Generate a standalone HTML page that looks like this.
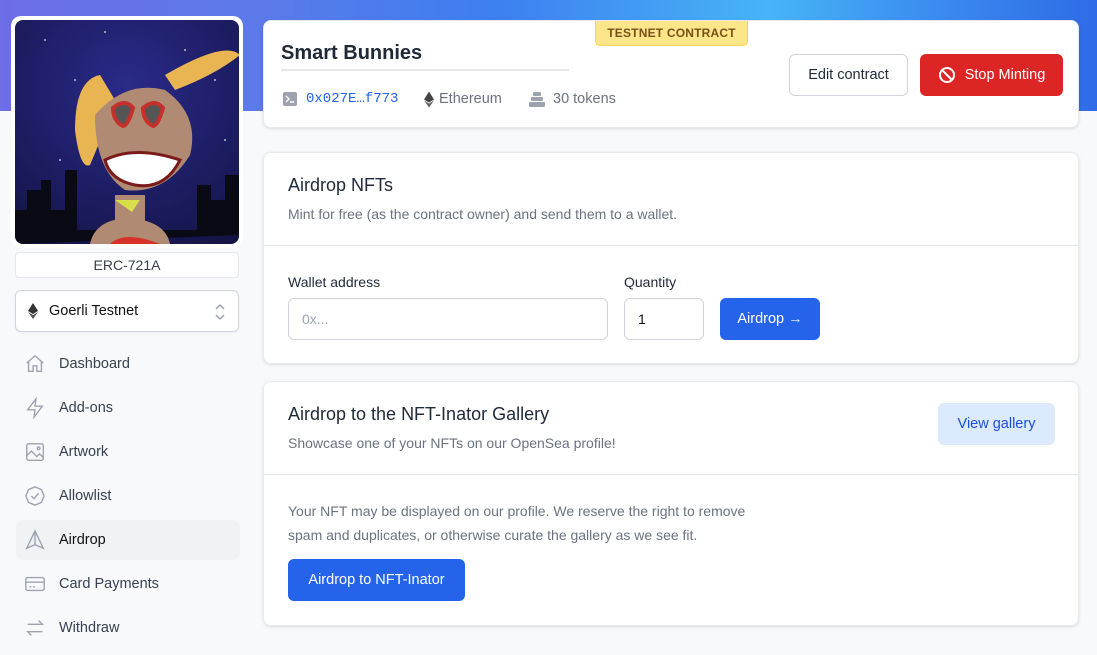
<!DOCTYPE html>
<html><head><meta charset="utf-8"><style>
*{box-sizing:border-box;margin:0;padding:0}
body{width:1097px;height:655px;overflow:hidden;background:#f8f9fb;font-family:"Liberation Sans",sans-serif;color:#1f2937;position:relative}
.band{position:absolute;left:0;top:0;width:1097px;height:111px;background:linear-gradient(90deg,#6d6ee8 0%,#5a7ae9 25%,#3d7ff0 45%,#47b4f6 70%,#3b8cf0 85%,#2f6be6 100%)}
.card{position:absolute;background:#fff;border-radius:8px;box-shadow:0 1px 3px rgba(0,0,0,.12);border:1px solid #e8eaee}
.nav{position:absolute;left:16px;width:224px;height:40px;display:flex;align-items:center;font-size:14.5px;color:#374151}
.nav svg{position:absolute;left:8px;width:22px;height:22px}
.nav span{position:absolute;left:43px}
.btn{position:absolute;border-radius:6px;font-size:14.5px;display:flex;align-items:center;justify-content:center}
.inp{position:absolute;border:1px solid #d1d5db;border-radius:6px;background:#fff;font-size:14px;padding-left:13px;display:flex;align-items:center}
</style></head><body>
<div class="band"></div>
<div style="position:absolute;left:11px;top:16px;width:232px;height:232px;background:#fff;border-radius:10px;"></div>
<div style="position:absolute;left:15px;top:20px;width:224px;height:224px;border-radius:8px;overflow:hidden;background:radial-gradient(circle at 50% 30%,#2a2a8a,#1a1a5a 70%,#121240)">
<svg width="224" height="224" viewBox="0 0 224 224">
<g fill="#fff" opacity=".7"><circle cx="30" cy="20" r="1"/><circle cx="90" cy="12" r="1"/><circle cx="170" cy="30" r="1"/><circle cx="200" cy="60" r="1"/><circle cx="45" cy="140" r="1"/><circle cx="210" cy="120" r="1"/><circle cx="60" cy="60" r="1"/></g>
<path d="M0 224V190h12v-20h14v-10h10v30h14v-40h12v60h120v-45h14v15h14v-25h14v60z" fill="#0a0a14"/>
<path d="M150 55 Q210 20 225 35 Q200 55 160 70z" fill="#e9b552"/>
<path d="M85 55 Q60 60 60 110 Q65 150 75 145 Q90 110 100 80z" fill="#e9b552"/>
<path d="M80 95 Q110 60 150 70 Q185 95 175 135 Q150 175 110 170 Q80 150 80 95z" fill="#b08a72"/>
<path d="M100 175 h30 v30 h-30z" fill="#b08a72"/>
<path d="M75 224 Q80 200 112 198 Q150 200 155 224z" fill="#b08a72"/>
<path d="M95 224 Q110 210 145 224z" fill="#d7322a"/>
<path d="M90 140 Q120 125 165 140 Q150 170 120 165 Q95 160 90 140z" fill="#fff" stroke="#7a1a1a" stroke-width="3"/>
<path d="M98 88 q12-10 20 0 q-5 18 -10 18 q-10-5 -10-18zM128 88 q12-10 20 0 q-5 18 -10 18 q-10-5 -10-18z" fill="#555" stroke="#c4302b" stroke-width="4"/>
<path d="M100 180 l25 0 l-8 12z" fill="#d7e04a"/>
</svg></div>
<div style="position:absolute;left:15px;top:252px;width:224px;height:26px;background:#fff;border:1px solid #e5e7eb;border-radius:4px;text-align:center;font-size:14px;line-height:24px;color:#374151">ERC-721A</div>
<div style="position:absolute;left:15px;top:290px;width:224px;height:42px;background:#fff;border:1px solid #d1d5db;border-radius:6px;box-shadow:0 1px 2px rgba(0,0,0,.05)">
<svg style="position:absolute;left:12px;top:12px" width="10" height="16" viewBox="0 0 10 16"><path d="M5 0L0 8l5 3 5-3z" fill="#333"/><path d="M0 9l5 7 5-7-5 3z" fill="#555"/></svg>
<span style="position:absolute;left:33px;top:12px;font-size:14.5px;color:#111">Goerli Testnet</span>
<svg style="position:absolute;left:198px;top:12px" width="12" height="18" viewBox="0 0 12 18" fill="none" stroke="#9ca3af" stroke-width="1.5"><path d="M2 6l4-4 4 4M2 12l4 4 4-4"/></svg>
</div>
<div class="nav" style="top:344px"><svg viewBox="0 0 24 24" fill="none" stroke="#9ca3af" stroke-width="1.5"><path d="M3 11l9-8 9 8M5 9v11h5v-6h4v6h5V9"/></svg><span>Dashboard</span></div>
<div class="nav" style="top:388px"><svg viewBox="0 0 24 24" fill="none" stroke="#9ca3af" stroke-width="1.5"><path d="M13 2L4 14h8l-1 8 9-12h-8z"/></svg><span>Add-ons</span></div>
<div class="nav" style="top:432px"><svg viewBox="0 0 24 24" fill="none" stroke="#9ca3af" stroke-width="1.5"><rect x="3" y="3" width="18" height="18" rx="2"/><path d="M3 16l5-5 6 6 3-3 4 4"/><circle cx="16" cy="8" r="1.5"/></svg><span>Artwork</span></div>
<div class="nav" style="top:476px"><svg viewBox="0 0 24 24" fill="none" stroke="#9ca3af" stroke-width="1.5"><path d="M12 2l7 3 3 7-3 7-7 3-7-3-3-7 3-7z"/><path d="M8 12l3 3 5-6"/></svg><span>Allowlist</span></div>
<div class="nav" style="top:520px;background:#f1f2f4;border-radius:8px;color:#111"><svg viewBox="0 0 24 24" fill="none" stroke="#9ca3af" stroke-width="1.5"><path d="M12 2L3 21l9-4 9 4z M12 2v15"/></svg><span>Airdrop</span></div>
<div class="nav" style="top:564px"><svg viewBox="0 0 24 24" fill="none" stroke="#9ca3af" stroke-width="1.5"><rect x="2" y="5" width="20" height="14" rx="2"/><path d="M2 10h20M6 15h2M10 15h2"/></svg><span>Card Payments</span></div>
<div class="nav" style="top:608px"><svg viewBox="0 0 24 24" fill="none" stroke="#9ca3af" stroke-width="1.5"><path d="M4 8h16l-4-4M20 16H4l4 4"/></svg><span>Withdraw</span></div>

<div class="card" style="left:263px;top:20px;width:816px;height:108px">
<div style="position:absolute;left:331px;top:0;width:153px;height:25px;background:#fde68a;border:1px solid #fcd34d;border-top:none;border-radius:0 0 5px 5px;font-size:12px;font-weight:bold;color:#78501a;text-align:center;line-height:24px;letter-spacing:.2px">TESTNET CONTRACT</div>
<div style="position:absolute;left:17px;top:21px;font-size:20px;font-weight:bold;color:#1f2937">Smart Bunnies</div>
<div style="position:absolute;left:17px;top:48px;width:288px;height:2px;background:#e5e7eb"></div>
<svg style="position:absolute;left:19px;top:71px" width="14" height="14" viewBox="0 0 14 14"><rect width="14" height="14" rx="2" fill="#9ca3af"/><path d="M3 4l3 3-3 3M7 10h4" stroke="#fff" stroke-width="1.4" fill="none"/></svg>
<span style="position:absolute;left:42px;top:70px;font-family:'Liberation Mono',monospace;font-size:14px;color:#2563eb">0x027E…f773</span>
<svg style="position:absolute;left:160px;top:70px" width="10" height="17" viewBox="0 0 10 16"><path d="M5 0L0 8l5 3 5-3z" fill="#444"/><path d="M0 9l5 7 5-7-5 3z" fill="#666"/></svg>
<span style="position:absolute;left:175px;top:70px;font-size:14.5px;color:#6b7280">Ethereum</span>
<svg style="position:absolute;left:265px;top:71px" width="16" height="15" viewBox="0 0 16 15" fill="#9ca3af"><rect x="4" y="0" width="8" height="4" rx="1"/><rect x="2" y="5" width="12" height="4" rx="1"/><rect x="0" y="10" width="16" height="5" rx="1"/></svg>
<span style="position:absolute;left:289px;top:70px;font-size:14.5px;color:#6b7280">30 tokens</span>
<div class="btn" style="left:525px;top:33px;width:119px;height:42px;border:1px solid #d1d5db;background:#fff;color:#1f2937">Edit contract</div>
<div class="btn" style="left:656px;top:33px;width:143px;height:42px;background:#dc2626;color:#fff"><svg width="18" height="18" viewBox="0 0 18 18" fill="none" stroke="#fff" stroke-width="2" style="margin-right:9px"><circle cx="9" cy="9" r="7"/><path d="M4 4l10 10"/></svg>Stop Minting</div>
</div>

<div class="card" style="left:263px;top:152px;width:816px;height:212px">
<div style="position:absolute;left:24px;top:22px;font-size:18px;color:#1f2937">Airdrop NFTs</div>
<div style="position:absolute;left:24px;top:53px;font-size:14px;color:#6b7280">Mint for free (as the contract owner) and send them to a wallet.</div>
<div style="position:absolute;left:0;top:92px;width:814px;height:1px;background:#e5e7eb"></div>
<div style="position:absolute;left:24px;top:121px;font-size:14px;color:#1f2937">Wallet address</div>
<div style="position:absolute;left:360px;top:121px;font-size:14px;color:#1f2937">Quantity</div>
<div class="inp" style="left:24px;top:145px;width:320px;height:42px;color:#9ca3af">0x...</div>
<div class="inp" style="left:360px;top:145px;width:80px;height:42px;color:#111">1</div>
<div class="btn" style="left:456px;top:145px;width:100px;height:42px;background:#2563eb;color:#fff">Airdrop →</div>
</div>

<div class="card" style="left:263px;top:381px;width:816px;height:245px">
<div style="position:absolute;left:24px;top:22px;font-size:18px;color:#1f2937">Airdrop to the NFT-Inator Gallery</div>
<div style="position:absolute;left:24px;top:53px;font-size:14px;color:#6b7280">Showcase one of your NFTs on our OpenSea profile!</div>
<div class="btn" style="left:674px;top:21px;width:117px;height:42px;background:#dbeafe;color:#1d4ed8">View gallery</div>
<div style="position:absolute;left:0;top:92px;width:814px;height:1px;background:#e5e7eb"></div>
<div style="position:absolute;left:24px;top:117px;width:490px;font-size:14px;line-height:24px;color:#6b7280">Your NFT may be displayed on our profile. We reserve the right to remove spam and duplicates, or otherwise curate the gallery as we see fit.</div>
<div class="btn" style="left:24px;top:177px;width:177px;height:42px;background:#2563eb;color:#fff">Airdrop to NFT-Inator</div>
</div>
</body></html>
